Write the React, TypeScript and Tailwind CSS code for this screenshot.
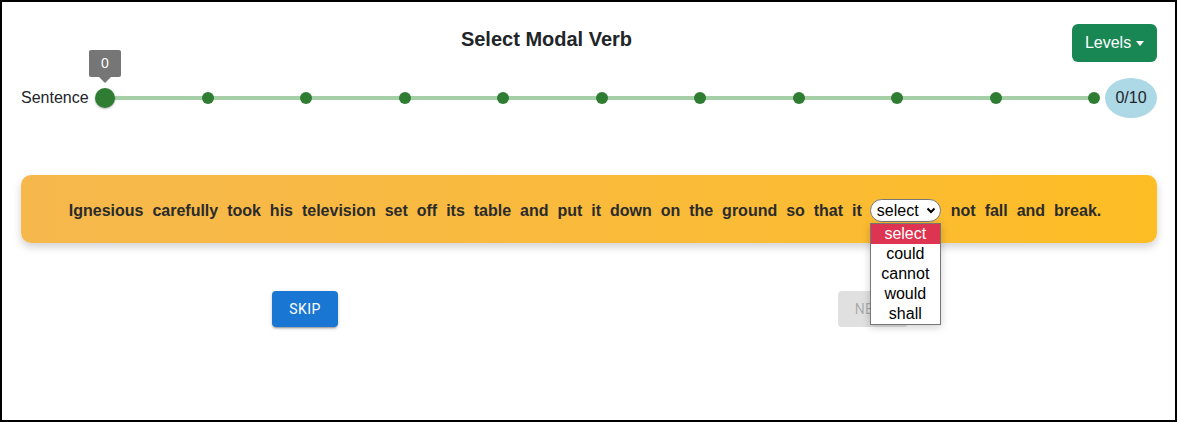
const options = ["select", "could", "cannot", "would", "shall"];

const before =
  "Ignesious carefully took his television set off its table and put it down on the ground so that it";
const after = "not fall and break.";

function Slider() {
  const dots = Array.from({ length: 10 });
  return (
    <div className="relative flex-1 h-5 flex items-center justify-between">
      <div className="absolute left-[10px] right-[6px] top-1/2 -translate-y-1/2 h-1 bg-[#a5cfa7]" />
      <div className="relative w-5 h-5 rounded-full bg-[#2e7d32] shadow-[0_1px_2px_rgba(0,0,0,0.3)]">
        <div className="absolute left-1/2 -translate-x-1/2 bottom-[31px] w-8 h-[27px] rounded-[2px] bg-[#767676] text-white text-[14px] flex items-center justify-center">
          0
          <div className="absolute left-1/2 -translate-x-1/2 top-full w-0 h-0 border-l-[6px] border-r-[6px] border-t-[6px] border-l-transparent border-r-transparent border-t-[#767676]" />
        </div>
      </div>
      {dots.map((_, i) => (
        <div key={i} className="relative w-3 h-3 rounded-full bg-[#2e7d32]" />
      ))}
    </div>
  );
}

export default function App() {
  return (
    <div className="w-[1177px] h-[422px] border-2 border-black bg-white font-['Liberation_Sans',Arial,sans-serif] text-[#212529]">
      <div className="pl-[19px] pr-[18px] pt-[22px]">
        {/* header */}
        <div className="flex items-start">
          <h1 className="flex-1 text-center text-[20px] leading-6 font-bold mt-[3px]">Select Modal Verb</h1>
          <button className="h-[38px] w-[85px] rounded-[6px] bg-[#198754] text-white text-base flex items-center justify-center gap-[5px]">
            Levels
            <span className="w-0 h-0 border-l-[4px] border-r-[4px] border-t-[5px] border-l-transparent border-r-transparent border-t-white" />
          </button>
        </div>

        {/* progress */}
        <div className="flex items-center mt-4">
          <span className="text-base w-[74px]">Sentence</span>
          <Slider />
          <div className="ml-[5px] w-[52px] h-10 rounded-[50%] bg-[#add8e6] flex items-center justify-center text-base">
            0/10
          </div>
        </div>

        {/* sentence card */}
        <div className="mt-[57px] h-[68px] pt-[3px] rounded-[10px] bg-gradient-to-r from-[#f6b84c] to-[#fdbd24] shadow-[0_4px_8px_rgba(0,0,0,0.18)] flex items-center justify-center">
          <p className="mr-[8px] text-base font-bold text-[#2b2b2b] [word-spacing:4.5px] flex items-center">
            <span>{before}</span>
            <span className="relative ml-[8px] mr-[10px]">
              <span className="h-[23px] w-[71px] rounded-full border border-[#767676] bg-white flex items-center justify-between pl-[6px] pr-[4px] font-normal text-black [word-spacing:0]">
                select
                <svg width="10" height="7" viewBox="0 0 10 7">
                  <path d="M1.5 1.5 L5 5 L8.5 1.5" fill="none" stroke="#000" strokeWidth="2" />
                </svg>
              </span>
              <span className="absolute left-0 top-[24px] w-[71px] border border-[#767676] bg-white shadow-[0_2px_8px_rgba(0,0,0,0.2)] z-10 font-normal text-black [word-spacing:0]">
                {options.map((o, i) => (
                  <span
                    key={o}
                    className={`block h-5 leading-5 text-center ${i === 0 ? "bg-[#dd3451] text-white" : ""}`}
                  >
                    {o}
                  </span>
                ))}
              </span>
            </span>
            <span>{after}</span>
          </p>
        </div>

        {/* actions */}
        <div className="grid grid-cols-2 mt-[48px] font-['Roboto',sans-serif]">
          <div className="flex justify-center">
            <button className="h-9 w-[66px] rounded bg-[#1976d2] text-white text-sm font-normal uppercase tracking-[0.4px] shadow-[0_3px_1px_-2px_rgba(0,0,0,0.2),0_2px_2px_0_rgba(0,0,0,0.14),0_1px_5px_0_rgba(0,0,0,0.12)]">
              Skip
            </button>
          </div>
          <div className="flex justify-center">
            <button className="h-9 w-[70px] rounded bg-[#e0e0e0] text-[rgba(0,0,0,0.26)] text-sm font-normal uppercase tracking-[0.4px]">
              Next
            </button>
          </div>
        </div>
      </div>
    </div>
  );
}
